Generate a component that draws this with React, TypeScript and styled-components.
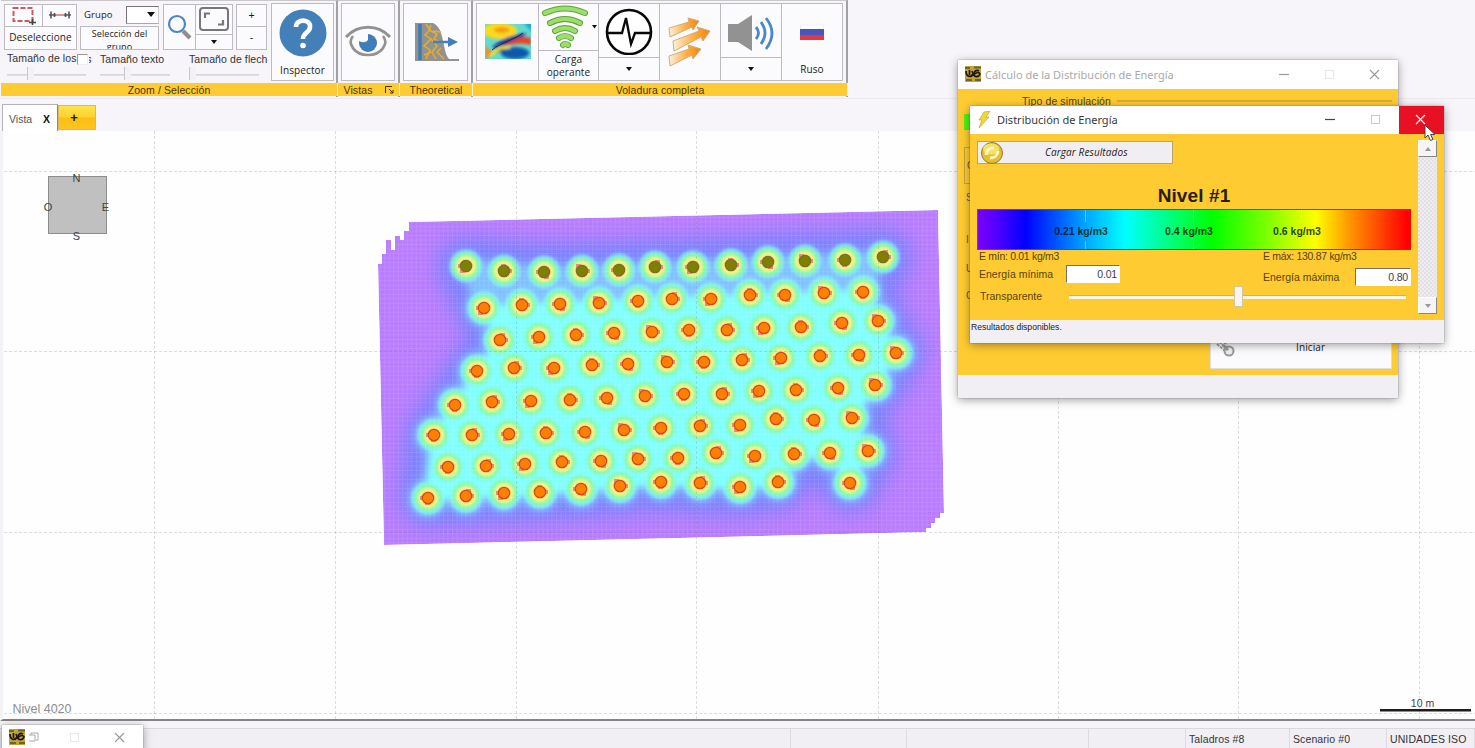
import React from 'react';
import styled, { createGlobalStyle } from 'styled-components';

const GlobalStyle = createGlobalStyle`
  * { box-sizing: border-box; }
  body { margin: 0; overflow: hidden; background: #f7f5f9; font-family: "Liberation Sans", Arial, sans-serif; font-size: 11px; color: #222; }
  svg { display: block; flex: none; }
`;

const GOLD = '#ffcb32';

const Shell = styled.div`
  position: relative; width: 1475px; height: 748px; overflow: hidden;
  display: flex; flex-direction: column; background: #f7f5f9;
`;
const Ribbon = styled.div`
  display: flex; height: 99px; flex: none; border-bottom: 1px solid #eceaee; padding-left: 1px;
`;
const Group = styled.section<{ $w: number }>`
  width: ${p => p.$w}px; height: 97px; display: flex; flex-direction: column;
  border-right: 2px solid #a3a1a5; border-top: 1px solid #c9c7cb;
`;
const GroupBody = styled.div`
  height: 82px; display: flex; padding: 2px 2px 2px 3px; background: #f7f5f9; flex: none;
`;
const GroupFooter = styled.div`
  height: 13px; margin: 0 -2px 0 0; border-right: 1px solid #fff3c9; background: ${GOLD};
  display: flex; align-items: center; justify-content: center; font-size: 10.5px; color: #4a3500; letter-spacing: 0.1px; gap: 12px;
`;
const Cell = styled.div<{ $w: number; $h: number; $top?: boolean }>`
  width: ${p => p.$w}px; height: ${p => p.$h}px;
  border: 1px solid #bdbbbf; background: #fbfafc; margin: 0 -1px -1px 0; flex: none;
  display: flex; flex-direction: column; align-items: center; justify-content: ${p => (p.$top ? 'flex-start' : 'center')};
  font-size: 10.5px; line-height: 13px; color: #1c1c1c; overflow: hidden; text-align: center;
`;
const Hand = styled.span<{ $size?: number; $slant?: boolean }>`
  font-family: "Open Sans", "Noto Sans", sans-serif; font-size: ${p => p.$size ?? 10}px; font-weight: 500; letter-spacing: .1px;
  font-style: ${p => (p.$slant ? 'italic' : 'normal')}; color: #222; white-space: nowrap; line-height: 13px;
`;
const Col = styled.div<{ $w?: number; $ml?: number }>`
  display: flex; flex-direction: column; flex: none; width: ${p => (p.$w ? p.$w + 'px' : 'auto')}; margin-left: ${p => p.$ml ?? 0}px;
`;
const Row = styled.div<{ $h?: number; $gap?: number; $pl?: number }>`
  display: flex; align-items: center; flex: none; height: ${p => (p.$h ? p.$h + 'px' : 'auto')}; gap: ${p => p.$gap ?? 0}px; padding-left: ${p => p.$pl ?? 0}px;
`;
const Select = styled.div`
  width: 33px; height: 18px; border: 1px solid #77757a; border-right-color: #ccc; border-bottom-color: #aaa; background: #fff;
  display: flex; align-items: center; justify-content: flex-end; padding-right: 3px; margin-left: auto;
`;
const SliderLabels = styled.div`
  display: grid; grid-template-columns: 93px 89px 78px; height: 15px; align-items: center; padding-left: 3px; margin-top: 2px;
  font-size: 10.5px; color: #333; white-space: nowrap; overflow: hidden; width: 264px; letter-spacing: 0.1px;
`;
const SliderRow = styled.div`
  display: grid; grid-template-columns: 93px 89px 78px; padding-left: 3px; height: 14px; align-items: center;
`;
const Slider = styled.div<{ $w: number; $at: number }>`
  width: ${p => p.$w}px; height: 12px; display: flex; align-items: center; padding-left: ${p => p.$at}px;
  background: linear-gradient(#d3d1d5, #e6e4e8) no-repeat 0 7px / 100% 2px;
  &::after { content: ''; width: 6px; height: 13px; background: #f3f1f5; border-left: 1px solid #c9c7cb; }
`;
const Check = styled.span`
  display: inline-block; width: 11px; height: 11px; background: #fff; border: 1px solid #999; border-right-color: #eee; border-bottom-color: #eee; vertical-align: -3px;
`;
const CutOff = styled.span`
  display: inline-block; width: 3px; overflow: hidden; direction: rtl; vertical-align: bottom; margin-left: 1px;
`;
const TabBar = styled.div`
  height: 32px; flex: none; display: flex; align-items: flex-end; padding-left: 2px;
`;
const Tab = styled.div`
  width: 56px; height: 27px; background: #fff; border: 1px solid #b5b3b8; border-right-color: #8a888d; border-bottom: 0; display: flex; align-items: center;
  justify-content: space-between; padding: 2px 7px 0 6px; font-size: 10.5px; color: #555;
  b { font-size: 10.5px; color: #111; }
`;
const AddTab = styled.div`
  width: 38px; height: 25px; margin-bottom: 1px; background: linear-gradient(#ffe44a, #ffd12d 48%, #fdbd14 52%, #ffc51e);
  border: 1px solid #d8b765; display: flex; align-items: center; justify-content: center; padding-right: 6px; font-weight: bold; font-size: 13px; color: #2a1a00;
`;
const Canvas = styled.main`
  height: 590px; flex: none; background: #fefefe; border-left: 3px solid #f4f2f6; border-bottom: 2px solid #858388; overflow: hidden;
  svg { margin-left: -3px; }
`;
const Status = styled.footer`
  height: 20px; margin-top: 7px; background: #f1eff3; border-top: 1px solid #dad8dc; display: grid;
  grid-template-columns: 791px 116px 182px 97px 104px 97px 88px; flex: none;
`;
const StatusCell = styled.div`
  border-right: 1px solid #dddbdf; padding: 3px 0 0 3px; font-size: 10.5px; color: #333; white-space: nowrap; line-height: 14px; letter-spacing: .1px;
`;
const Win = styled.div<{ $x: number; $y: number; $w: number; $h: number }>`
  position: absolute; left: ${p => p.$x}px; top: ${p => p.$y}px; width: ${p => p.$w}px; height: ${p => p.$h}px;
  display: flex; flex-direction: column; background: ${GOLD}; box-shadow: 0 2px 9px rgba(0,0,0,.38), 0 0 1px rgba(0,0,0,.5);
`;
const Title = styled.div<{ $h: number; $dim?: boolean }>`
  height: ${p => p.$h}px; flex: none; background: #fff; display: flex; align-items: center; gap: ${p => (p.$dim ? 4 : 6)}px; padding-left: 7px; padding-bottom: 1px;
  font-family: "Noto Sans", "Open Sans", sans-serif; font-size: 11px; color: ${p => (p.$dim ? '#a9a9ab' : '#39393d')}; white-space: nowrap;
`;
const Controls = styled.div`
  margin-left: auto; display: flex; align-self: stretch; margin-bottom: -1px;
`;
const Ctl = styled.div<{ $hot?: boolean }>`
  width: 45px; display: flex; align-items: center; justify-content: center; padding: 0 2px 1px 0; background: ${p => (p.$hot ? '#e81123' : 'transparent')};
`;
const WinFoot = styled.div`
  height: 23px; flex: none; margin-top: auto; background: #f1eff3; font-size: 8.6px; line-height: 15px; padding-left: 1px; color: #222;
`;
const SimBody = styled.div`
  flex: 1; display: flex; flex-direction: column; padding: 2px 6px 6px 6px;
`;
const SimGroup = styled.div`
  height: 20px; display: flex; align-items: center; font-size: 10.5px; color: #55400a; gap: 6px; letter-spacing: .1px;
  &::before { content: ''; width: 52px; }
  &::after { content: ''; flex: 1; border-top: 2px solid #d9ad38; }
`;
const SimEdge = styled.div`
  display: flex; flex-direction: column; font-size: 10px; color: #6d5410; padding: 3px 0 0 2px; line-height: 14px;
`;
const EdgeMark = styled.i<{ $h: number }>`
  font-style: normal; height: ${p => p.$h}px; display: flex; align-items: center;
`;
const EdgeBox = styled.i`
  height: 37px; width: 20px; margin: 17px 0 0 -2px; border: 1px solid #c9a23a; display: flex; align-items: center; padding-left: 2px; font-style: normal;
`;
const Green = styled.i`width: 12px; height: 16px; background: #52f21a; margin-left: -2px;`;
const Start = styled.div`
  width: 182px; height: 46px; background: #fbfafc; margin: auto 0 0 auto; border: 1px solid #ddd; display: flex; align-items: center; padding: 2px 0 0 3px; gap: 60px;
`;
const EnergyBody = styled.div`
  flex: 1; display: flex; padding: 5px 7px 5px 7px;
`;
const EnergyMain = styled.div`
  width: 434px; display: flex; flex-direction: column;
`;
const Load = styled.div`
  width: 196px; height: 23px; margin-top: 2px; background: #f1eef3; border: 1px solid #b9a469; display: flex; align-items: center; padding-left: 2px; gap: 41px;
`;
const Level = styled.h2`
  margin: 18px 0 0; font-size: 19px; line-height: 27px; height: 27px; text-align: center; color: #2a1c00; font-weight: bold; letter-spacing: .1px;
`;
const Scale = styled.div`
  height: 41px; border: 1px solid #5e5a20; border-left-color: #75621f; border-right: 0; position: relative; flex: none;
  background: linear-gradient(90deg, #7a00ff 0%, #5500ff 4%, #0000ff 11%, #0060ff 19%, #00a8ff 25%, #00ffff 34%, #00ff90 43%, #00ff00 54%, #80ff00 67%, #ffff00 78%, #ffa000 85%, #ff5000 92%, #ff0000 99%);
  font-weight: bold; font-size: 10.5px;
`;
const Mark = styled.span<{ $x: number }>`
  position: absolute; left: ${p => p.$x}px; top: 0; height: 39px; display: flex; align-items: center; justify-content: center; width: 70px; padding-top: 2px; color: rgba(0,20,0,.82); white-space: nowrap;
  background: linear-gradient(rgba(255,255,255,.35) 30%, transparent 30%, transparent 80%, rgba(255,255,255,.35) 80%) no-repeat 39px 0 / 1px 100%;
`;
const Line = styled.div<{ $h: number; $tight?: boolean }>`
  display: grid; grid-template-columns: 284px 150px; height: ${p => p.$h}px; align-items: center; font-size: 10.5px; letter-spacing: ${p => (p.$tight ? -0.3 : 0)}px; color: #5a430b; white-space: nowrap;
`;
const Field = styled.div<{ $w: number }>`
  width: ${p => p.$w}px; height: 18px; background: #fff; border: 1px solid #fff; border-top-color: #75705f; border-left-color: #75705f; text-align: right; padding: 0 2px; line-height: 16px; color: #3b3b50; letter-spacing: -.2px;
`;
const Labelled = styled.div<{ $shift?: number; $push?: number }>`
  display: flex; align-items: center; justify-content: space-between; padding-left: 2px; padding-right: ${p => p.$push ?? 0}px; padding-top: ${p => p.$shift ?? 0}px;
`;
const TransRow = styled.div`
  display: flex; height: 20px; align-items: center; padding-left: 3px; font-size: 10.5px; color: #5a430b;
`;
const Track = styled.div`
  width: 337px; height: 20px; margin-left: auto; margin-right: 5px; display: flex; align-items: center; padding-left: 165px;
  background: linear-gradient(#c9b070 0 1px, #fbf7ea 1px) no-repeat 0 9px / 100% 4px;
  &::after { content: ''; width: 7px; height: 19px; background: #f6f4f8; border: 1px solid #d5c795; }
`;
const Scroll = styled.div`
  width: 19px; height: 174px; margin: 1px 0 0 7px; display: flex; flex-direction: column; justify-content: space-between;
  background: repeating-conic-gradient(#e2e0e4 0 25%, #efedf1 0 50%) 0 0 / 4px 4px;
`;
const ScrollBtn = styled.div`
  height: 17px; background: #f6f4f7; border: 1px solid #fff; border-right: 1px solid #88858c; border-bottom: 1px solid #88858c; display: flex; align-items: center; justify-content: center;
`;
const Cursor = styled.div`position: absolute; left: 1424px; top: 124px;`;

const Down = ({ s = 6, c = '#111' }: { s?: number; c?: string }) => (
  <svg width={s} height={s / 2 + 1} viewBox="0 0 8 5" preserveAspectRatio="none"><path d="M0 0H8L4 5Z" fill={c} /></svg>
);
const Min = ({ c }: { c: string }) => <svg width="11" height="11"><path d="M0 5.5H10" stroke={c} strokeWidth="1.2" /></svg>;
const Max = ({ c }: { c: string }) => <svg width="11" height="11"><rect x="1.5" y="1.5" width="8" height="8" fill="none" stroke={c} /></svg>;
const Close = ({ c }: { c: string }) => <svg width="11" height="11"><path d="M1 1L10 10M10 1L1 10" stroke={c} strokeWidth="1.1" /></svg>;
const AppLogo = () => (
  <svg width="16" height="16" viewBox="0 0 16 16">
    <rect width="16" height="16" fill="#c5a238" />
    <path d="M0 2H5M9 1.500H16M1 14H7M10 14H16" stroke="#6b6038" strokeWidth="2" />
    <path d="M1 5C1 11 6 12 8 8M4.500 4V9M7 5L9 10" stroke="#171617" strokeWidth="1.700" fill="none" />
    <path d="M14 5C11 3 9 6 9 8C9 12 14 11 15 8C14 6 12 6 10 8" stroke="#171617" strokeWidth="1.700" fill="none" />
  </svg>
);

const holes: [number, number][][] = [
  [[466, 266], [504, 271], [544, 272], [582, 271], [619, 270], [655, 267], [693, 267], [731, 265], [768, 262], [805, 261], [845, 260], [883, 257]],
  [[484, 308], [522, 305], [560, 304], [599, 303], [638, 301], [672, 299], [711, 299], [750, 295], [785, 295], [824, 293], [863, 292]],
  [[500, 340], [539, 337], [576, 335], [614, 333], [652, 332], [689, 330], [727, 330], [764, 328], [801, 327], [842, 323], [878, 321]],
  [[477, 371], [514, 368], [554, 368], [592, 365], [628, 364], [667, 362], [704, 362], [742, 360], [781, 358], [820, 356], [859, 355], [896, 353]],
  [[455, 405], [492, 402], [531, 401], [570, 400], [607, 398], [645, 396], [684, 394], [722, 394], [759, 391], [796, 390], [838, 388], [875, 385]],
  [[434, 435], [472, 435], [509, 434], [546, 433], [585, 432], [624, 430], [661, 428], [700, 426], [740, 425], [776, 419], [814, 420], [852, 418]],
  [[448, 467], [486, 466], [525, 464], [562, 462], [601, 461], [638, 459], [678, 458], [716, 453], [755, 456], [794, 454], [830, 453], [868, 451]],
  [[428, 498], [466, 496], [504, 493], [540, 492], [581, 489], [620, 486], [661, 482], [700, 483], [740, 487], [778, 482], [850, 483]],
];
const outline = 'M409 222L938 210L944 513H940V518H935V523H931V528H926V532L384 545L378 264H382V254H386V240H391V250H395V236H400V240H404V231H409Z';
const right = 'L878 321L896 353L875 385L852 418L868 451L850 483L830 455L794 456L778 482L740 487L661 482L540 492L428 498L434 435L455 405L477 371L500 340L484 308Z';
const fullArea = 'M466 266L544 272L619 270L731 265L883 257L863 292' + right;
const coreArea = 'M484 308L560 304L672 299L863 292' + right;
const all = holes.flatMap((r, i) => r.map(([x, y]) => ({ x, y, i })));

const Contour = ({ d, spread, fill, blur, dots, firstDots }: { d: string; spread: number; fill: string; blur: string; dots: number; firstDots: number }) => (
  <g filter={`url(#${blur})`} fill={fill} stroke={fill} strokeLinejoin="round">
    <path d={d} strokeWidth={spread} />
    {all.map(h => <circle key={`${h.x}-${h.y}`} cx={h.x} cy={h.y} r={h.i === 0 ? firstDots : dots} stroke="none" />)}
  </g>
);

const Blast = () => (
  <svg width="1475" height="588" viewBox="0 131 1475 588">
    <defs>
      {[['b1', 10], ['b2', 5], ['b3', 3]].map(([id, s]) => (
        <filter key={id} id={id as string} filterUnits="userSpaceOnUse" x="340" y="180" width="650" height="400" colorInterpolationFilters="sRGB"><feGaussianBlur stdDeviation={s as number} /></filter>
      ))}
      <radialGradient id="halo">
        <stop offset="0.3" stopColor="#ffd080" /><stop offset="0.45" stopColor="#f0f582" /><stop offset="0.66" stopColor="#8cf8a0" stopOpacity=".9" /><stop offset="0.8" stopColor="#80fbc8" stopOpacity=".55" /><stop offset="1" stopColor="#80ffff" stopOpacity="0" />
      </radialGradient>
      <pattern id="mesh" width="4.52" height="4.52" patternUnits="userSpaceOnUse"><path d="M0 .5H5M.5 0V5" stroke="#fff" strokeOpacity=".11" /></pattern>
      <clipPath id="zone"><path d={outline} /></clipPath>
    </defs>
    <g clipPath="url(#zone)">
      <path d={outline} fill="#b97bff" />
      <Contour d={fullArea} spread={58} fill="#7a80ff" blur="b1" dots={29} firstDots={29} />
      <Contour d={fullArea} spread={14} fill="#80bfff" blur="b2" dots={19} firstDots={14} />
      <Contour d={coreArea} spread={4} fill="#80ffff" blur="b3" dots={15} firstDots={13} />
      {all.map(h => <circle key={`${h.x}-${h.y}`} cx={h.x} cy={h.y} r="18" fill="url(#halo)" />)}
      <rect x="370" y="200" width="580" height="350" fill="url(#mesh)" />
    </g>
    <g stroke="#777" strokeOpacity=".24" strokeDasharray="3 2">
      {[154.5, 335.5, 516.5, 696.5, 878.5, 1058.5, 1238.5, 1419.5].map(x => <path key={x} d={`M${x} 131V720`} />)}
      {[171.5, 351.5, 532.5, 713.5].map(y => <path key={y} d={`M4 ${y}H1475`} />)}
    </g>
    {all.map((h, k) => (
      <g key={k} fill="#f08a78">
        <path d={`M${h.x + (k % 3 - 1) * 3 - 3} ${h.y + (k % 2 ? -7 : 3)}h5v4h-5z`} />
        <path d={`M${h.x + (k % 2 ? 4 : -8)} ${h.y - 2}h4v4h-4z`} />
        <circle cx={h.x} cy={h.y} r="5.7" fill={h.i === 0 ? '#7f8000' : '#ff8000'} stroke={h.i === 0 ? '#75702c' : '#cf4a18'} strokeWidth="1.2" />
      </g>
    ))}
    <rect x="48.5" y="176.5" width="58" height="57" fill="#c0c0c0" stroke="#8d8d8d" />
    <g fontFamily="Liberation Sans, Arial, sans-serif" fontSize="11" fill="#444" textAnchor="middle">
      <text x="76.500" y="182">N</text><text x="76.500" y="240">S</text><text x="48" y="211">O</text><text x="105.500" y="211">E</text>
      <text x="42" y="713" fontSize="12.500" fill="#8d8d8d">Nivel 4020</text>
      <text x="1422.500" y="707" fontSize="10.500">10 m</text>
    </g>
    <path d="M1380 710.300H1471" stroke="#1d1d1d" strokeWidth="2.400" />
  </svg>
);

export default function App() {
  return (
    <Shell>
      <GlobalStyle />
      <Ribbon>
        <Group $w={337}>
          <GroupBody>
            <Col $w={264}>
              <Row $h={46}>
                <Col $w={73}>
                  <Row>
                    <Cell $w={39} $h={23}>
                      <svg width="26" height="20" viewBox="0 0 26 20"><rect x="2.500" y="3" width="19" height="13" fill="none" stroke="#cf5961" strokeWidth="2" strokeDasharray="5 2" /><path d="M18 17.500H25M21.500 14V20" stroke="#444" strokeWidth="1.600" /></svg>
                    </Cell>
                    <Cell $w={35} $h={23}>
                      <svg width="24" height="10" viewBox="0 0 24 10"><path d="M8 5H16" stroke="#d97a7c" strokeWidth="1.600" /><path d="M1 5H8M16 5H23M3 1.500V8.500M21 1.500V8.500M6.500 3V7M17.500 3V7" stroke="#555" strokeWidth="1.600" /></svg>
                    </Cell>
                  </Row>
                  <Cell $w={73} $h={24}><Hand $size={10}>Deseleccione</Hand></Cell>
                </Col>
                <Col $w={79} $ml={3}>
                  <Row $h={22} $pl={4}><Hand $size={9.5}>Grupo</Hand><Select><Down s={8} /></Select></Row>
                  <Cell $w={79} $h={24} $top><Hand $size={9}>Selección del<br />grupo</Hand></Cell>
                </Col>
                <Col $ml={4}>
                  <Cell $w={33} $h={46}>
                    <svg width="26" height="28" viewBox="0 0 26 28"><path d="M16 18L23 25" stroke="#8f8f90" strokeWidth="4.200" /><circle cx="10" cy="11" r="8" fill="#fafbfe" stroke="#4b86c4" strokeWidth="2.200" /></svg>
                  </Cell>
                </Col>
                <Col>
                  <Cell $w={38} $h={31}>
                    <svg width="32" height="26" viewBox="0 0 32 26"><rect x="2" y="2" width="28" height="22" rx="3" fill="none" stroke="#77777a" strokeWidth="2" /><path d="M7 12V7.500H12M25 14V18.500H20" fill="none" stroke="#77777a" strokeWidth="2.200" /></svg>
                  </Cell>
                  <Cell $w={38} $h={16}><Down /></Cell>
                </Col>
                <Col $ml={4}>
                  <Cell $w={31} $h={23}>+</Cell>
                  <Cell $w={31} $h={24}>-</Cell>
                </Col>
              </Row>
              <SliderLabels><span>Tamaño de los<Check /><CutOff>s</CutOff></span><span>Tamaño texto</span><span>Tamaño de flech</span></SliderLabels>
              <SliderRow><Slider $w={79} $at={20} /><Slider $w={70} $at={24} /><Slider $w={70} $at={0} /></SliderRow>
            </Col>
            <Col $ml={3}>
              <Cell $w={63} $h={78}>
                <svg width="50" height="57" viewBox="0 0 50 57">
                  <circle cx="25" cy="26" r="23.500" fill="#4480b8" />
                  <path d="M18 20C18 11 33 12 32 20C32 26 25 25 25 32" fill="none" stroke="#fff" strokeWidth="4.600" /><circle cx="25" cy="38.500" r="2.800" fill="#fff" />
                </svg>
                <Hand>Inspector</Hand>
              </Cell>
            </Col>
          </GroupBody>
          <GroupFooter>Zoom / Selección</GroupFooter>
        </Group>
        <Group $w={62}>
          <GroupBody>
            <Cell $w={54} $h={78}>
              <svg width="46" height="36" viewBox="0 0 46 36">
                <path d="M1 13C13 0 33 0 45 13" fill="none" stroke="#929292" strokeWidth="3.200" /><path d="M8 12C2 19 9 31 23 31C37 31 44 19 38 12" fill="none" stroke="#929292" strokeWidth="2.600" />
                <circle cx="23" cy="19" r="9" fill="#3f7db9" /><path d="M14 9H23V16Q20 20 14 17Z" fill="#fbfafc" />
              </svg>
            </Cell>
          </GroupBody>
          <GroupFooter>
            <span>Vistas</span>
            <svg width="9" height="8" viewBox="0 0 9 8"><path d="M.5 7V.5H7M4 3L8 7M8 4V7H5" fill="none" stroke="#4a3500" /></svg>
          </GroupFooter>
        </Group>
        <Group $w={73}>
          <GroupBody>
            <Cell $w={65} $h={78}>
              <svg width="46" height="42" viewBox="0 0 46 42">
                <path d="M2 2H20C32 7 29 30 36 38H46V40H2Z" fill="#929292" /><path d="M7 3V39" stroke="#3f7ab1" strokeWidth="3.500" />
                <path d="M13 3L17 9L12 14L18 18L11 25L17 29L13 38M18 4L16 9L24 13L21 18L28 22M18 18L24 25L19 31L23 38M28 27L24 31L31 38M11 34L18 31M20 10L28 11" fill="none" stroke="#e8ae28" strokeWidth="1.500" />
                <path d="M20 21H37" stroke="#4480b8" strokeWidth="2.500" /><path d="M35 16L45 21L35 26Z" fill="#4480b8" />
              </svg>
            </Cell>
          </GroupBody>
          <GroupFooter>Theoretical</GroupFooter>
        </Group>
        <Group $w={375}>
          <GroupBody>
            <Cell $w={63} $h={78}>
              <svg width="46" height="36" viewBox="0 0 46 36">
                <defs><filter id="soft"><feGaussianBlur stdDeviation="1.700" /></filter><clipPath id="map"><rect width="46" height="35" /></clipPath></defs>
                <g clipPath="url(#map)"><rect width="46" height="35" fill="#64d9cf" />
                  <g filter="url(#soft)"><ellipse cx="15" cy="7" rx="17" ry="8" fill="#ffd91c" /><ellipse cx="17" cy="6" rx="8" ry="3" fill="#f39b17" /><path d="M7 23Q20 11 42 9L34 17L10 25Z" fill="#173c9c" /><path d="M17 23Q36 10 46 14V21Q37 18 24 21Z" fill="#ef421d" /><ellipse cx="30" cy="29" rx="14" ry="6" fill="#0759aa" /><path d="M0 22L8 28L1 36Z" fill="#f28924" /><path d="M38 -2H48V9Z" fill="#16a9de" /><path d="M5 32L15 24L25 23" stroke="#f5e72f" strokeWidth="3" /></g>
                  <path d="M7 26C17 18 25 18 38 9" fill="none" stroke="#26282b" />
                </g>
              </svg>
            </Cell>
            <Col>
              <Cell $w={61} $h={48}>
                <Row $gap={2}>
                  <svg width="49" height="44" viewBox="0 0 49 44">
                    <g fill="none" stroke="#58a82f" strokeWidth="6" strokeLinecap="round"><path d="M4 8Q24-1 44 8" /><path d="M9 18Q24 10 39 18" /><path d="M14 26Q24 20 34 26" /><path d="M18 33Q24 29 30 33" /><path d="M22 40Q24 38 27 40" /></g>
                    <g fill="none" stroke="#9edb70" strokeWidth="4.200" strokeLinecap="round"><path d="M4 8Q24-1 44 8" /><path d="M9 18Q24 10 39 18" /><path d="M14 26Q24 20 34 26" /><path d="M18 33Q24 29 30 33" /><path d="M22 40Q24 38 27 40" /></g>
                  </svg>
                  <Down s={5} />
                </Row>
              </Cell>
              <Cell $w={61} $h={31}><Hand>Carga<br />operante</Hand></Cell>
            </Col>
            <Col>
              <Cell $w={62} $h={55}>
                <svg width="48" height="48" viewBox="0 0 48 48"><circle cx="24" cy="25" r="22" fill="#fff" stroke="#080808" strokeWidth="2.600" /><path d="M2 26H17L21 11L26 37L30 26H46" fill="none" stroke="#080808" strokeWidth="2.300" /></svg>
              </Cell>
              <Cell $w={62} $h={24}><Down /></Cell>
            </Col>
            <Cell $w={62} $h={78}>
              <svg width="44" height="50" viewBox="0 0 44 50">
                <defs><linearGradient id="or"><stop offset="0" stopColor="#fff0d8" /><stop offset=".55" stopColor="#ffae43" /><stop offset="1" stopColor="#f48408" /></linearGradient></defs>
                <g fill="url(#or)" stroke="#c8a77b" strokeWidth=".9"><path d="M1 11L21 5L20 1L31 4L25 13L24 10L2 20Z" /><path d="M5 24L31 14L29 10L42 14L35 24L33 20L6 34Z" /><path d="M1 39L21 32L20 28L33 32L25 42L24 38L2 49Z" /></g>
              </svg>
            </Cell>
            <Col>
              <Cell $w={62} $h={55}>
                <svg width="50" height="44" viewBox="0 0 50 38" ><path d="M2 12H12L26 3V39L12 30H2Z" fill="#929292" /><path d="M30 15Q35 21 30 27M35 10Q43 21 35 32M40 6Q52 21 40 37" fill="none" stroke="#4a88c7" strokeWidth="2.800" /></svg>
              </Cell>
              <Cell $w={62} $h={24}><Down /></Cell>
            </Col>
            <Cell $w={62} $h={78}>
              <svg width="24" height="55" viewBox="0 0 24 55"><path d="M.5 17H23.500V21H.5Z" fill="#fff" stroke="#e5e5e8" strokeWidth=".5" /><path d="M0 21H24V27H0Z" fill="#4a55bb" /><path d="M0 27H24V32H0Z" fill="#e03844" /></svg>
              <Hand>Ruso</Hand>
            </Cell>
          </GroupBody>
          <GroupFooter>Voladura completa</GroupFooter>
        </Group>
      </Ribbon>
      <TabBar><Tab>Vista <b>X</b></Tab><AddTab>+</AddTab></TabBar>
      <Canvas><Blast /></Canvas>
      <Status>
        <StatusCell /><StatusCell /><StatusCell /><StatusCell />
        <StatusCell>Taladros #8</StatusCell><StatusCell>Scenario #0</StatusCell><StatusCell>UNIDADES ISO</StatusCell>
      </Status>

      <Win $x={2} $y={725} $w={141} $h={30}>
        <Title $h={25} $dim>
          <AppLogo />
          <svg width="10" height="10" viewBox="3 0 10 10"><path d="M5 3V1H12V8H10M3 3H9V9H3" fill="none" stroke="#aaa" /></svg>
          <Controls><Ctl><Max c="#e8e8e8" /></Ctl><Ctl><Close c="#999" /></Ctl></Controls>
        </Title>
      </Win>

      <Win $x={958} $y={60} $w={440} $h={338}>
        <Title $h={29} $dim>
          <AppLogo /><span>Cálculo de la Distribución de Energía</span>
          <Controls><Ctl><Min c="#999" /></Ctl><Ctl><Max c="#e5e5e5" /></Ctl><Ctl><Close c="#999" /></Ctl></Controls>
        </Title>
        <SimBody>
          <SimGroup>Tipo de simulación</SimGroup>
          <SimEdge>
            <Green />
            <EdgeBox>C</EdgeBox>
            <EdgeMark $h={28}>S</EdgeMark><EdgeMark $h={20} />
            <EdgeMark $h={16}>I</EdgeMark><EdgeMark $h={14} /><EdgeMark $h={14}>U</EdgeMark><EdgeMark $h={14} /><EdgeMark $h={12}>C</EdgeMark>
          </SimEdge>
          <Start>
            <svg width="22" height="24" viewBox="0 0 22 24"><path d="M2 4L12 13M3 9L11 16M7 4L13 10" stroke="#999" strokeWidth="1.800" strokeDasharray="3 1" /><circle cx="15" cy="16" r="4.500" fill="#eee" stroke="#999" strokeWidth="2" /><path d="M9 10L14 15" stroke="#999" strokeWidth="3" /></svg>
            <Hand>Iniciar</Hand>
          </Start>
        </SimBody>
        <WinFoot />
      </Win>

      <Win $x={970} $y={106} $w={474} $h={237}>
        <Title $h={28}>
          <svg width="14" height="18" viewBox="0 0 14 18"><path d="M7 1L13 0L9 6H12L2 17L5 9H2Z" fill="#f0d83a" stroke="#c4a721" strokeWidth=".7" /></svg>
          <span>Distribución de Energía</span>
          <Controls><Ctl><Min c="#444" /></Ctl><Ctl><Max c="#c9c9c9" /></Ctl><Ctl $hot><Close c="#fff" /></Ctl></Controls>
        </Title>
        <EnergyBody>
          <EnergyMain>
            <Load>
              <svg width="24" height="22" viewBox="0 0 24 22"><circle cx="12" cy="11" r="10.500" fill="#e8bf29" stroke="#8c7b3c" /><ellipse cx="11" cy="7" rx="8" ry="5.500" fill="#f6e06a" /><path d="M6 13C6 9 9 6 14 6M18 9C18 13 15 16 10 16" fill="none" stroke="#fff6c9" strokeWidth="3" /></svg>
              <Hand $slant>Cargar Resultados</Hand>
            </Load>
            <Level>Nivel #1</Level>
            <Scale><Mark $x={68}>0.21 kg/m3</Mark><Mark $x={176}>0.4 kg/m3</Mark><Mark $x={284}>0.6 kg/m3</Mark></Scale>
            <Line $h={12} $tight><Labelled>E mín: 0.01 kg/m3</Labelled><Labelled>E máx: 130.87 kg/m3</Labelled></Line>
            <Line $h={24}>
              <Labelled $push={141}><span>Energía mínima</span><Field $w={54}>0.01</Field></Labelled>
              <Labelled $shift={5}><span>Energía máxima</span><Field $w={56}>0.80</Field></Labelled>
            </Line>
            <TransRow>Transparente<Track /></TransRow>
          </EnergyMain>
          <Scroll>
            <ScrollBtn><svg width="6" height="4"><path d="M0 4H6L3 0Z" fill="#999" /></svg></ScrollBtn>
            <ScrollBtn><Down c="#999" /></ScrollBtn>
          </Scroll>
        </EnergyBody>
        <WinFoot>Resultados disponibles.</WinFoot>
      </Win>
      <Cursor><svg width="12" height="18" viewBox="0 0 12 18"><path d="M1 1V14L4 11L6.500 16.500L9 15.500L6.500 10.500H11Z" fill="#fff" stroke="#444" /></svg></Cursor>
    </Shell>
  );
}
